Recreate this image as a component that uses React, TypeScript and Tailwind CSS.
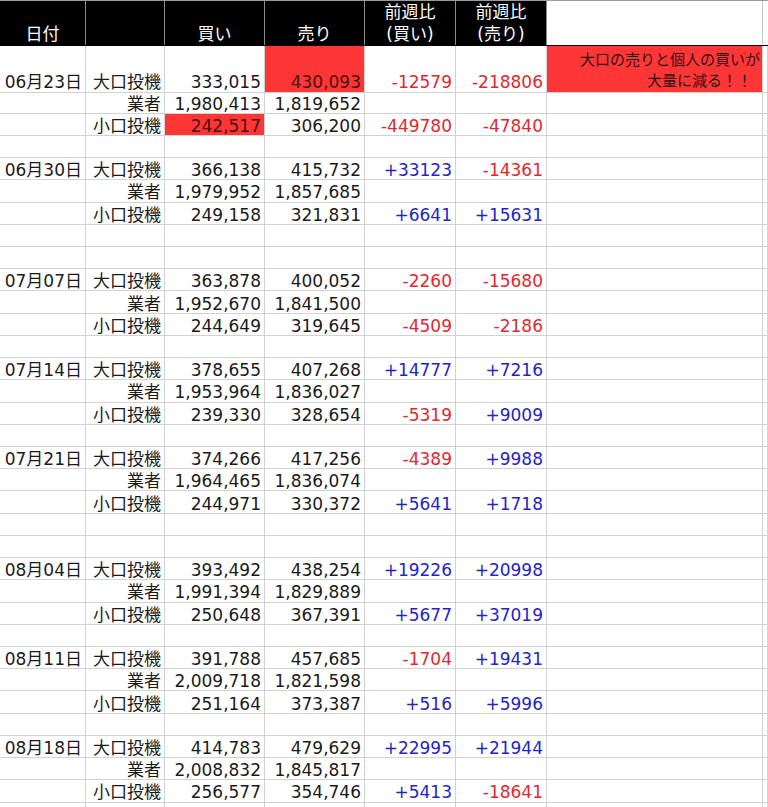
import React from "react";

type Row = {
  date?: string;
  label: string;
  buy: string;
  sell: string;
  db?: string;
  ds?: string;
  redBuy?: boolean;
  redSell?: boolean;
};

type Group = { date: string; rows: [string, string, string?, string?][]; blanks: number };

const groups: Group[] = [
  {
    date: "06月30日",
    rows: [
      ["366,138", "415,732", "+33123", "-14361"],
      ["1,979,952", "1,857,685"],
      ["249,158", "321,831", "+6641", "+15631"],
    ],
    blanks: 2,
  },
  {
    date: "07月07日",
    rows: [
      ["363,878", "400,052", "-2260", "-15680"],
      ["1,952,670", "1,841,500"],
      ["244,649", "319,645", "-4509", "-2186"],
    ],
    blanks: 1,
  },
  {
    date: "07月14日",
    rows: [
      ["378,655", "407,268", "+14777", "+7216"],
      ["1,953,964", "1,836,027"],
      ["239,330", "328,654", "-5319", "+9009"],
    ],
    blanks: 1,
  },
  {
    date: "07月21日",
    rows: [
      ["374,266", "417,256", "-4389", "+9988"],
      ["1,964,465", "1,836,074"],
      ["244,971", "330,372", "+5641", "+1718"],
    ],
    blanks: 2,
  },
  {
    date: "08月04日",
    rows: [
      ["393,492", "438,254", "+19226", "+20998"],
      ["1,991,394", "1,829,889"],
      ["250,648", "367,391", "+5677", "+37019"],
    ],
    blanks: 1,
  },
  {
    date: "08月11日",
    rows: [
      ["391,788", "457,685", "-1704", "+19431"],
      ["2,009,718", "1,821,598"],
      ["251,164", "373,387", "+516", "+5996"],
    ],
    blanks: 1,
  },
  {
    date: "08月18日",
    rows: [
      ["414,783", "479,629", "+22995", "+21944"],
      ["2,008,832", "1,845,817"],
      ["256,577", "354,746", "+5413", "-18641"],
    ],
    blanks: 2,
  },
];

const labels = ["大口投機", "業者", "小口投機"];

const gridCols = "grid grid-cols-[86px_79px_100px_100px_91px_91px_216px_1fr]";

function deltaColor(v?: string) {
  if (!v) return "";
  return v.startsWith("-") ? "text-[#e0282e]" : "text-[#2323c8]";
}

function Cell({
  children,
  className = "",
}: {
  children?: React.ReactNode;
  className?: string;
}) {
  return (
    <div
      className={
        "border-r border-b border-[#d2d2d2] flex items-center justify-end pr-[3px] pt-[3px] leading-[18px] whitespace-nowrap overflow-hidden " +
        className
      }
    >
      {children}
    </div>
  );
}

function TallCell({
  children,
  className = "",
}: {
  children?: React.ReactNode;
  className?: string;
}) {
  return (
    <div
      className={
        "border-r border-b border-[#d2d2d2] flex items-end justify-end pr-[3px] pb-[1px] leading-[18px] whitespace-nowrap overflow-hidden " +
        className
      }
    >
      {children}
    </div>
  );
}

function DataRow({ r }: { r: Row }) {
  return (
    <div className={gridCols + " h-[22.23px]"}>
      <Cell>{r.date}</Cell>
      <Cell>{r.label}</Cell>
      <Cell className={r.redBuy ? "bg-[#ff3636] text-[#4a1010]" : ""}>{r.buy}</Cell>
      <Cell className={r.redSell ? "bg-[#ff3636] text-[#4a1010]" : ""}>{r.sell}</Cell>
      <Cell className={deltaColor(r.db)}>{r.db}</Cell>
      <Cell className={deltaColor(r.ds)}>{r.ds}</Cell>
      <Cell />
      <Cell />
    </div>
  );
}

function BlankRow() {
  return (
    <div className={gridCols + " h-[22.23px]"}>
      {Array.from({ length: 8 }).map((_, i) => (
        <Cell key={i} />
      ))}
    </div>
  );
}

function HeaderCell({ children }: { children?: React.ReactNode }) {
  return (
    <div className="bg-black text-white border-r border-[#8a8a8a] flex flex-col items-center justify-end leading-[22px] whitespace-nowrap">
      {children}
    </div>
  );
}

export default function App() {
  return (
    <div className="w-[768px] h-[807px] overflow-hidden bg-white text-[#1a1a1a] text-[17px] font-['DejaVu_Sans','Noto_Sans_CJK_JP',sans-serif]">
      <div className="border-t border-[#9a9a9a]">
        {/* header */}
        <div className={gridCols + " h-[45px] border-b border-black"}>
          <HeaderCell>
            <span>日付</span>
          </HeaderCell>
          <HeaderCell />
          <HeaderCell>
            <span>買い</span>
          </HeaderCell>
          <HeaderCell>
            <span>売り</span>
          </HeaderCell>
          <HeaderCell>
            <span>前週比</span>
            <span>(買い)</span>
          </HeaderCell>
          <HeaderCell>
            <span>前週比</span>
            <span>(売り)</span>
          </HeaderCell>
          <div className="border-r border-[#c8c8c8]" />
          <div />
        </div>

        {/* first tall row */}
        <div className={gridCols + " h-[45.5px]"}>
          <TallCell>06月23日</TallCell>
          <TallCell>大口投機</TallCell>
          <TallCell>333,015</TallCell>
          <TallCell className="bg-[#ff3636] text-[#4a1010]">430,093</TallCell>
          <TallCell className="text-[#e0282e]">-12579</TallCell>
          <TallCell className="text-[#e0282e]">-218806</TallCell>
          <div className="border-r border-b border-[#d2d2d2] bg-[#ff3636] flex flex-col items-end justify-start pr-[2px] pt-[3px] text-[15px] leading-[22px] text-[#2a1414] whitespace-nowrap">
            <span>大口の売りと個人の買いが</span>
            <span className="pr-[8px] -mt-[1px]">大量に減る！！</span>
          </div>
          <TallCell />
        </div>
        <DataRow r={{ label: "業者", buy: "1,980,413", sell: "1,819,652" }} />
        <DataRow
          r={{
            label: "小口投機",
            buy: "242,517",
            sell: "306,200",
            db: "-449780",
            ds: "-47840",
            redBuy: true,
          }}
        />
        <BlankRow />

        {groups.map((g) => (
          <React.Fragment key={g.date}>
            {g.rows.map((row, i) => (
              <DataRow
                key={i}
                r={{
                  date: i === 0 ? g.date : undefined,
                  label: labels[i],
                  buy: row[0],
                  sell: row[1],
                  db: row[2],
                  ds: row[3],
                }}
              />
            ))}
            {Array.from({ length: g.blanks }).map((_, i) => (
              <BlankRow key={"b" + i} />
            ))}
          </React.Fragment>
        ))}
      </div>
    </div>
  );
}
